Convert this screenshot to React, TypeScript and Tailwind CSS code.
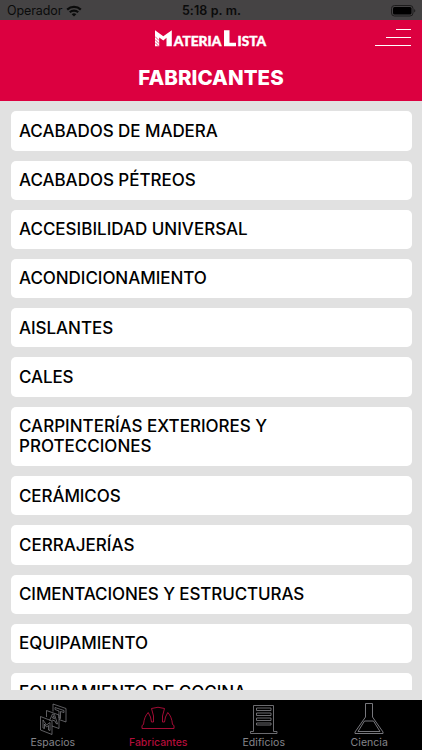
const categories = [
  { name: "ACABADOS DE MADERA", spacing: "tracking-[-0.06px]" },
  { name: "ACABADOS PÉTREOS", spacing: "tracking-[-0.03px]" },
  { name: "ACCESIBILIDAD UNIVERSAL", spacing: "tracking-[0px]" },
  { name: "ACONDICIONAMIENTO", spacing: "tracking-[-0.05px]" },
  { name: "AISLANTES", spacing: "tracking-[-0.05px]" },
  { name: "CALES", spacing: "tracking-[-0.1px]" },
  { name: "CARPINTERÍAS EXTERIORES Y PROTECCIONES", spacing: "tracking-[0px]" },
  { name: "CERÁMICOS", spacing: "tracking-[-0.1px]" },
  { name: "CERRAJERÍAS", spacing: "tracking-[0px]" },
  { name: "CIMENTACIONES Y ESTRUCTURAS", spacing: "tracking-[-0.1px]" },
  { name: "EQUIPAMIENTO", spacing: "tracking-[0px]" },
  { name: "EQUIPAMIENTO DE COCINA", spacing: "tracking-[-0.05px]" },
];

function StatusBar() {
  return (
    <div className="flex h-5 shrink-0 items-center justify-between bg-[#454344] pl-[7px] pr-[6px] pt-[2px] text-[#0b0b0b]">
      <div className="flex w-[120px] items-center gap-[4px]">
        <span className="text-[12.500px] leading-4 tracking-[-0.1px]">Operador</span>
        <svg width="16" height="12" viewBox="0 0 16 12" fill="none" stroke="currentColor" strokeWidth="2.2">
          <path d="M1.2 4.6a9.8 9.8 0 0 1 13.6 0" />
          <path d="M3.8 7.3a6 6 0 0 1 8.4 0" />
          <path d="M8 11.6 5.7 9.3a3.3 3.3 0 0 1 4.6 0z" fill="currentColor" stroke="none" />
        </svg>
      </div>
      <span className="text-[12.500px] font-semibold leading-4 tracking-[0.1px]">5:18 p. m.</span>
      <div className="flex w-[120px] justify-end">
        <svg width="25" height="12" viewBox="0 0 25 12">
          <rect x="0.5" y="0.5" width="21.5" height="10.5" rx="3" fill="none" stroke="#1d1c1c" />
          <rect x="2" y="2" width="18.5" height="7.5" rx="1.5" fill="#000" />
          <path d="M23.2 4v3.600q1.1-.5 1.100-1.800T23.200 4z" fill="#1d1c1c" />
        </svg>
      </div>
    </div>
  );
}

function Logo() {
  return (
    <svg width="114" height="20" viewBox="0 0 114 20" fill="#fff" className="font-['Lato']">
      <path d="M1 2.300 9.300 8.300 17.800 2.300V18.300h-5.300V9.800L9.300 12.500 5.200 9.500V18.300H1z" />
      <path d="M1 8.500l4 4M1 11.500l4 4M1 14.500l4 4" stroke="#dc0040" strokeWidth="0.7" />
      <text x="19.800" y="18.300" fontSize="13" fontWeight="900" stroke="#fff" strokeWidth="0.4" textLength="47.500" lengthAdjust="spacingAndGlyphs">
        ATERIA
      </text>
      <path d="M70 2.300h5.500v12.500H82v3.500H70z" />
      <text x="83.500" y="18.300" fontSize="13" fontWeight="900" stroke="#fff" strokeWidth="0.4" textLength="28.500" lengthAdjust="spacingAndGlyphs">
        ISTA
      </text>
    </svg>
  );
}

function Header() {
  return (
    <header className="h-[81px] shrink-0 bg-[#dc0040] text-white">
      <div className="flex h-9 justify-between">
        <div className="w-12" />
        <div className="pt-2">
          <Logo />
        </div>
        <button className="flex w-12 flex-col items-end gap-[7px] pr-[11px] pt-[9px]">
          <span className="h-px w-[15px] bg-white" />
          <span className="h-px w-[25px] bg-white" />
          <span className="h-px w-9 bg-white" />
        </button>
      </div>
      <h1 className="pt-2 text-center text-[20.500px] font-extrabold leading-7 tracking-[0.05px]">FABRICANTES</h1>
    </header>
  );
}

function SpacesIcon() {
  return (
    <svg width="28" height="33" viewBox="0 0 28 33" fill="none" stroke="#85858a" strokeWidth="0.7">
      <path d="M1.500 13.500 13 18v13.500L1.500 27z" />
      <path d="M7.500 14V7.500L20 12v13.500l-7-2.500" />
      <path d="M14 8.500V1l13 4.500V19l-7-2.500" />
      <path d="M4 25v-8l3.500 5 3.500-2.500v8l-1.500-.5v-4.500l-2 1.500-2-3V25.500z" />
      <path d="M10.500 17.500 13.500 11l2 .5 3 9.500-1.500-.5-1-2.500-3-1M13.500 15l2 .7-1-3z" />
      <path d="M16 4.500 25 7.500v2l-3.500-1v7l-1.500-.5V8L16 6.500z" />
    </svg>
  );
}

function MakersIcon() {
  return (
    <svg width="34" height="24" viewBox="0 0 34 24" fill="none" stroke="#b30d3a" strokeWidth="0.9">
      <path d="M1 22.500h32v-3l-1.500-1C31 13 29.500 9.500 26.800 6.500L24.500 11l-1 5h-2v-6l2-7.500Q17 0 10.500 2.500l2 7.500v6h-2l-1-5L7.200 6.500C4.500 9.500 3 13 2.500 18.500l-1.500 1z" />
    </svg>
  );
}

function BuildingsIcon() {
  return (
    <svg width="30" height="31" viewBox="0 0 30 31" fill="none" stroke="#77777c" strokeWidth="0.9">
      <path d="M4.500 27.500V1.500h20v26H28v2H1.500v-2z" />
      <path d="M7.500 4h14.500v2.500H7.500zM7.500 9h14.500v2.500H7.500zM7.500 14h14.500v2.500H7.500zM7.500 19h14.500v2H7.500z" />
    </svg>
  );
}

function ScienceIcon() {
  return (
    <svg width="32" height="33" viewBox="0 0 32 33" fill="none" stroke="#85858a" strokeWidth="0.9">
      <path d="M12.500 1.500h7V15l10.500 15v1.500H2V30l10.500-15z" />
      <path d="M11.500 19h9L27 29.500H5z" />
    </svg>
  );
}

function TabBar() {
  return (
    <nav className="grid h-[50px] shrink-0 grid-cols-4 bg-black text-[10.500px] leading-3 text-[#85858a]">
      <div className="flex flex-col items-center">
        <div className="flex h-[37px] items-start pt-[3px]"><SpacesIcon /></div>
        <span className="tracking-[-0.05px]">Espacios</span>
      </div>
      <div className="flex flex-col items-center text-[#b30d3a]">
        <div className="flex h-[37px] items-start pt-[6px]"><MakersIcon /></div>
        <span className="font-medium tracking-[-0.05px]">Fabricantes</span>
      </div>
      <div className="flex flex-col items-center">
        <div className="flex h-[37px] items-start pt-[4px]"><BuildingsIcon /></div>
        <span className="tracking-[0.05px]">Edificios</span>
      </div>
      <div className="flex flex-col items-center">
        <div className="flex h-[37px] items-start pt-[2px]"><ScienceIcon /></div>
        <span className="tracking-[0.05px]">Ciencia</span>
      </div>
    </nav>
  );
}

export default function App() {
  return (
    <div className="flex h-[750px] w-[422px] flex-col overflow-hidden bg-[#e1e1e1] font-['Inter',sans-serif]">
      <StatusBar />
      <Header />
      <main className="min-h-0 flex-1 px-[10.500px] pb-[10px] pt-[10.400px]">
        <ul className="flex h-full flex-col gap-[10px] overflow-hidden">
          {categories.map((category) => {
            return (
              <li
                key={category.name}
                className="shrink-0 rounded-[5px] bg-white px-[8.500px] pb-[9.500px] pt-[9.300px] text-[17px] font-medium leading-[20.400px] text-black"
              >
                <p className={`w-[300px] ${category.spacing}`}>{category.name}</p>
              </li>
            );
          })}
        </ul>
      </main>
      <TabBar />
    </div>
  );
}
